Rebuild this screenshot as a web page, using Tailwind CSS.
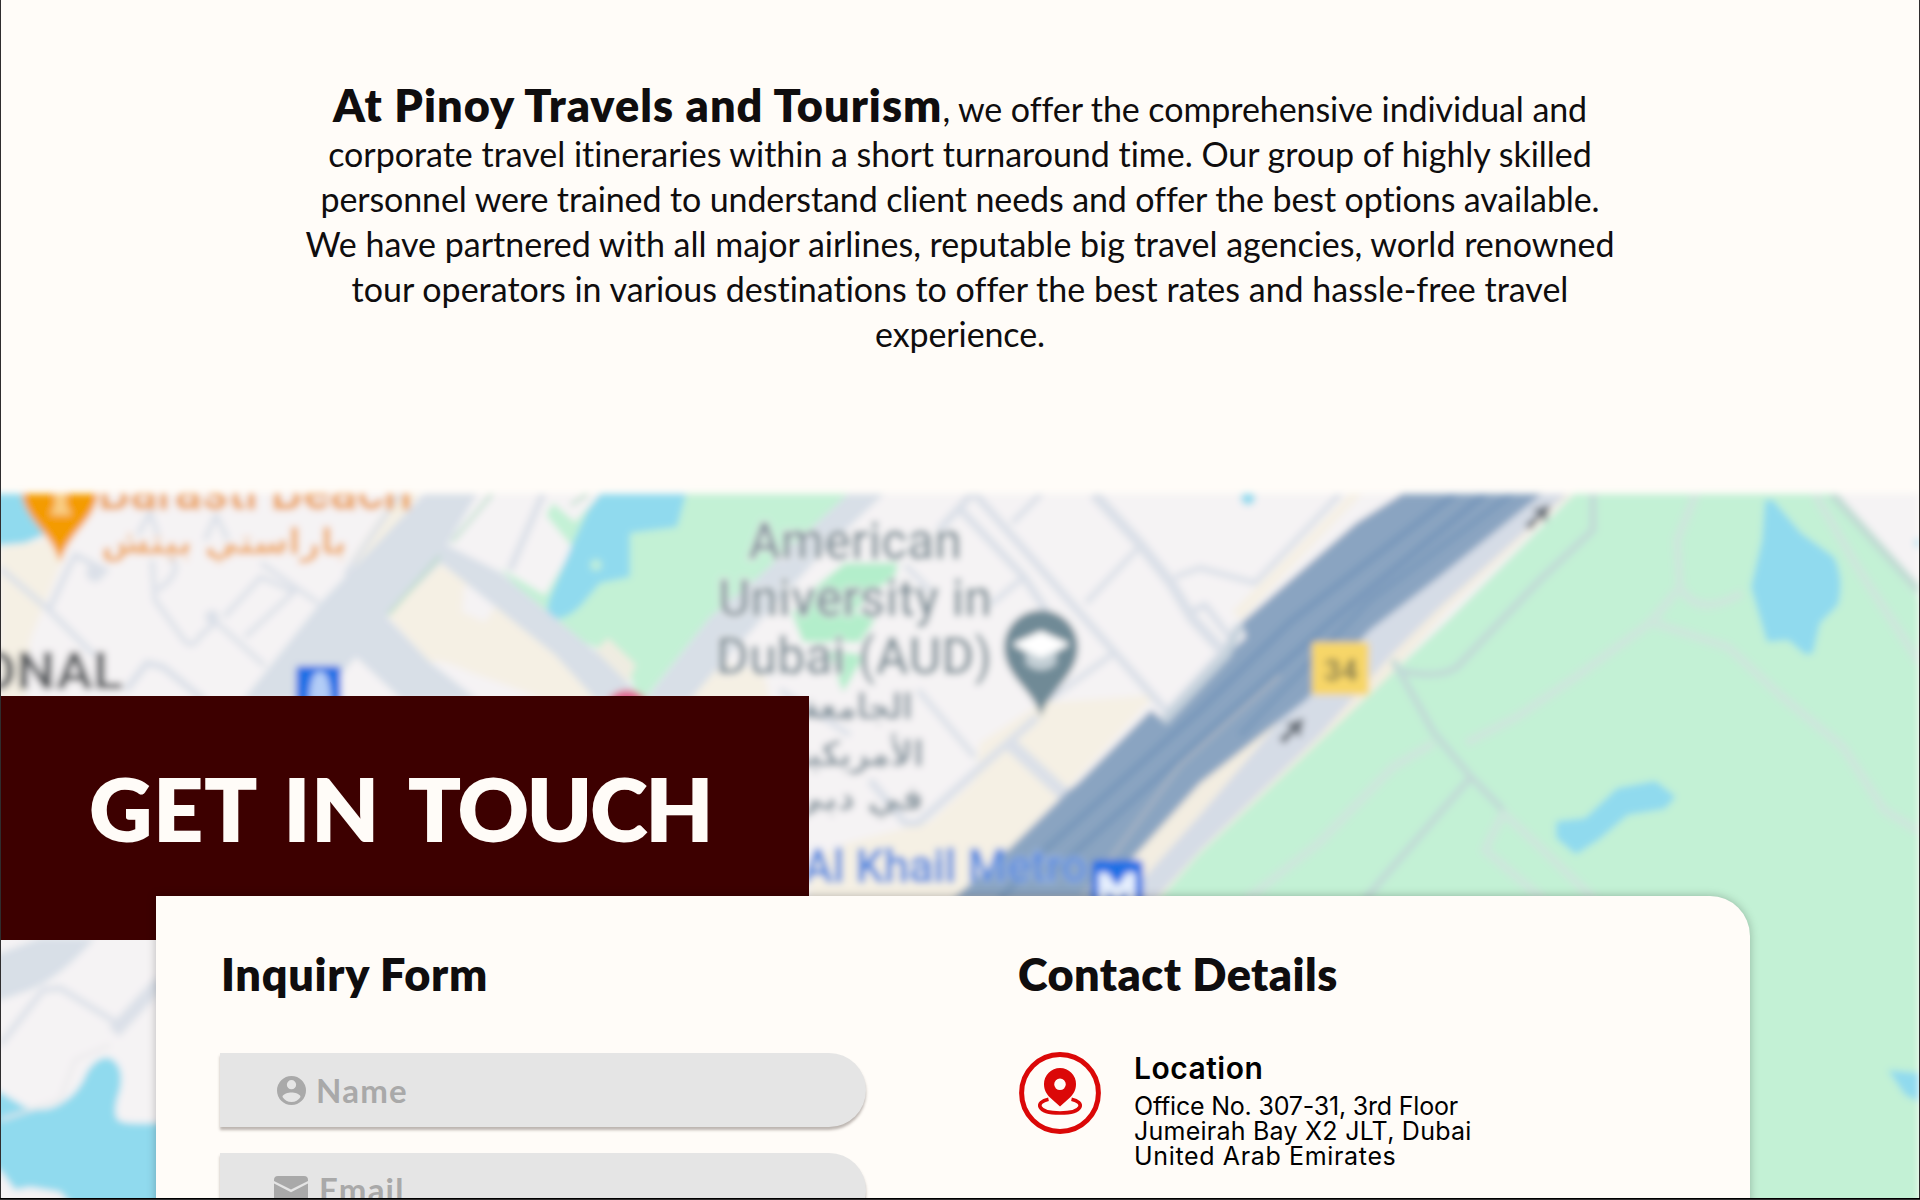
<!DOCTYPE html>
<html lang="en">
<head>
<meta charset="utf-8">
<title>Pinoy Travels and Tourism</title>
<script src="https://cdn.jsdelivr.net/npm/@tailwindcss/browser@4"></script>
</head>
<body class="bg-[#fffcf8]">
<main class="relative w-[1920px] h-[1200px] overflow-hidden bg-[#fffcf8] font-['Lato',sans-serif] text-[#0f0d0e]">

  <!-- Introduction -->
  <section class="h-[494px] pt-[83px] text-center">
    <p class="flex flex-col items-center whitespace-nowrap text-[34px] leading-[45px] [font-variant-ligatures:none]">
      <span class="mb-[3px] h-[45px]"><strong class="text-[45px] leading-[45px] font-[800] tracking-[1.06px]">At Pinoy Travels and Tourism</strong><span class="tracking-[-0.08px]">, we offer the comprehensive individual and</span></span>
      <span class="tracking-[-0.02px]">corporate travel itineraries within a short turnaround time. Our group of highly skilled</span>
      <span class="tracking-[-0.11px]">personnel were trained to understand client needs and offer the best options available.</span>
      <span>We have partnered with all major airlines, reputable big travel agencies, world renowned</span>
      <span>tour operators in various destinations to offer the best rates and hassle-free travel</span>
      <span class="tracking-[-0.1px]">experience.</span>
    </p>
  </section>

  <!-- Contact -->
  <section class="relative h-[706px]">
    <svg class="absolute left-0 top-0 overflow-visible" width="1920" height="706" viewBox="0 494 1920 706" font-family="Roboto, sans-serif" aria-hidden="true">
      <defs><filter id="soft" x="0" y="470" width="1930" height="740" filterUnits="userSpaceOnUse"><feGaussianBlur stdDeviation="3.5"/></filter>
      <clipPath id="frame"><rect x="-20" y="494" width="1939" height="720"/></clipPath></defs>
      <g filter="url(#soft)"><g clip-path="url(#frame)">
        <rect x="-20" y="494" width="1940" height="720" fill="#f5f3f4"/>
        <!-- sand areas -->
        <g fill="#f5f0e4">
          <path d="M0 547 45 540 62 560 46 600 30 640 25 700H0Z"/>
          <path d="M437 562 388 616 430 662Q440 658 470 672L520 690 545 700H600L590 665Z"/>
          <path d="M980 743 1041 703 1155 695 1069 787 1008 850 990 900H809V860L850 842 930 822 975 780Z"/>
          <path d="M710 658 688 700H770L764 672Z"/>
          <path d="M1362 494 1241 620 1232 612 1350 494Z"/>
          <path d="M395 494 350 560 360 572 420 494Z"/>
        </g>
        <path d="M464 585 500 600 485 622 462 612Z" fill="#f5f3f4"/>
        <!-- parks -->
        <g fill="#c3f1d5">
          <path d="M500 568 545 595 573 548 546 515 553 503 575 522 600 494H848L755 580 710 617 640 705 625 660 590 645 555 630Z"/>
          <path d="M1574 494H1830L1920 600V1214H1100V960L1155 897 1200 853 1374 690 1448 620Z"/>
        </g>
        <g fill="#b3eecb">
          <path d="M845 563H898L894 580 872 590 855 612 875 620 860 642H803L792 613 812 590Z"/><path d="M828 650 864 655 843 692Z"/>
        </g>
        <path d="M592 655 608 638 636 665 624 690Z" fill="#efece1"/>
        <!-- water -->
        <g fill="#90daee">
          <path d="M-20 494H26L44 535 25 543-20 547Z"/>
          <path d="M600 494H686L677 527 630 533V577L600 583 588 597Q572 618 556 619L547 612 549 600 571 547 588 510Z"/>
          <path d="M1765 500H1773L1801 533 1834 557Q1845 580 1838 605L1820 623 1813 653 1806 655 1788 640 1767 642 1751 587 1762 540Z"/>
          <path d="M1558 823 1586 820 1618 790 1655 783 1673 797 1664 807 1627 813 1599 837 1576 852 1558 837Z" stroke="#90daee" stroke-width="4" stroke-linejoin="round"/>
          <path d="M-20 1085 0 1092 25 1107Q45 1114 62 1103Q80 1092 87 1072Q98 1055 110 1058Q125 1066 120 1090Q112 1112 118 1120Q125 1125 156 1123H200V1214H80L60 1192 30 1187 15 1190 0 1170-20 1165Z"/>
          <path d="M1888 1070 1920 1073V1102L1905 1095Z"/>
          <circle cx="1248" cy="498" r="7"/><circle cx="1920" cy="543" r="5"/>
        </g>
        <circle cx="596" cy="565" r="6" fill="#bdeedb"/>
        <!-- streets -->
        <g fill="#d8dfe7">
          <path d="M424 494H477L447 545 500 572 600 655 645 700H596L555 655 441 563 386 616 430 662 478 700H402L356 657 320 700H243L320 603Z"/>
          <path d="M848 494H884L828 547 722 663 690 700H645L710 617 755 580Z"/>
          <path d="M-10 957 40 938H95Q60 978 30 990L-10 1004Z"/>
        </g>
        <g fill="none" stroke="#dbe0e8" stroke-linejoin="round">
          <g stroke-width="6">
            <path d="M0 568 49 610 94 655M49 610 69 567 75 555 108 572"/>
            <path d="M152 560 155 600 184 640Q193 650 200 636L216 622 265 666" stroke-width="5"/>
            <path d="M224 617 261 577 294 592 245 637M261 563 318 603M158 590Q185 570 170 558" stroke-width="5"/>
            <path d="M126 690 147 663 163 667 204 700" stroke-width="7"/>
            <path d="M138 535 150 512 158 535M205 540 216 515 228 540M400 494 345 575" stroke-width="5"/>
            <path d="M543 494 510 570" stroke-width="7"/>
            <path d="M0 1045 43 990 60 988 125 1028"/>
            <path d="M114 1032 160 982" stroke-width="14"/>
            <path d="M0 1120 60 1100 75 1060 110 1045" stroke="#e9e9ea" stroke-width="3"/>
            <path d="M959 508 1024 577 1047 612M975 494 1167 712M972 494 939 530" stroke-width="8"/>
            <path d="M1086 603 1139 547M1049 700 1114 653M1012 523 1041 494M1024 577 990 605"/>
            <path d="M1094 494 1139 543 1171 583 1192 618 1226 655" stroke-width="11"/>
            <path d="M1175 577 1200 568 1255 583 1340 494" stroke-width="6"/>
            <path d="M1185 615 1205 605 1232 640 1167 712" stroke-width="7"/>
            <path d="M1037 717 918 823H905L870 780" stroke-width="8"/>
            <path d="M1006 740 1065 795" stroke-width="14"/>
            <path d="M918 690 975 757M905 565 930 590M780 690 850 735"/>
          </g>
        </g>
        <path d="M571 505 588 494M492 494 452 542M440 556 388 615" fill="none" stroke="#b5dcc6" stroke-width="3"/>
        <circle cx="95" cy="573" r="9" fill="#dbe0e8"/><circle cx="212" cy="617" r="7" fill="#dbe0e8"/>
        <!-- highway -->
        <path d="M1402 494H1572L1448 610 1385 680 1200 853 1150 910H955L1250 645Z" fill="#f3ede1"/>
        <path d="M1500 494H1567L1440 607 1393 653 1320 735 1200 850 1150 905H1120L1200 815 1370 615Z" fill="#d5dce6"/>
        <path d="M1402 494 1356 523 1241 623 1246 637 1200 680 1163 720 1151 710 1078 783 1069 790 1008 850 952 900H1094L1131 860 1200 783 1306 700 1370 630 1439 577 1542 494Z" fill="#8aa4c1"/>
        <g fill="none" stroke="#7898bb" stroke-width="7">
          <path d="M1455 494 1290 622 1200 710 1045 850 1000 900M1485 494 1330 622 1210 730 1050 875"/>
          <path d="M1512 494 1370 600 1240 735" stroke-width="5"/>
        </g>
        <path d="M1280 675 1180 765 1082 897" fill="none" stroke="#aeb8c3" stroke-width="3"/>
        <path d="M1240 625 1226 655 1163 722" fill="none" stroke="#c5d1dc" stroke-width="9"/>
        <!-- park paths -->
        <g fill="none" stroke="#cde7dc" stroke-width="9" stroke-linejoin="round">
          <path d="M1696 494 1677 540 1680 587 1650 623 1576 677 1517 717 1466 743M1682 590Q1700 618 1742 593M1654 623 1728 647 1780 695 1843 747 1884 810 1920 832M1815 494 1861 573 1920 663M1434 743 1393 767 1319 843 1246 900M1503 813 1485 850 1544 900M1500 810 1540 847 1595 900"/>
          <path d="M1593 494V530L1540 580 1457 667Q1440 680 1397 670M1393 660 1434 733 1471 777 1503 810M1471 777 1384 877 1365 900" stroke="#c1dad7" stroke-width="7"/>
          <path d="M1832 494 1920 592" stroke="#c0dcd3"/>
        </g>
        <g fill="#6d757e"><path d="M1532 510 1550 504 1546 523 1541 517 1530 530 1525 525 1538 514Z"/><path d="M1285 724 1304 718 1300 738 1295 732 1284 744 1279 739 1291 728Z"/></g>
        <rect x="1312" y="642" width="57" height="53" rx="3" fill="#f7d667"/>
        <text x="1324" y="681" font-size="31" font-weight="700" fill="#857d50" textLength="34" lengthAdjust="spacingAndGlyphs">34</text>
        <!-- place labels -->
        <g font-size="51" font-weight="500" fill="#7b8c95" stroke="#fbfbfb" stroke-width="3" paint-order="stroke">
          <text x="748" y="559" textLength="214" lengthAdjust="spacingAndGlyphs">American</text>
          <text x="718" y="616" textLength="274" lengthAdjust="spacingAndGlyphs">University in</text>
          <text x="716" y="674" textLength="276" lengthAdjust="spacingAndGlyphs">Dubai (AUD)</text>
        </g>
        <g font-size="35" font-weight="700" fill="#8b9aa3" text-anchor="middle" font-family="'DejaVu Sans', sans-serif">
          <text x="857" y="719" textLength="112" lengthAdjust="spacingAndGlyphs">الجامعة</text>
          <text x="857" y="766" textLength="134" lengthAdjust="spacingAndGlyphs">الأمريكية</text>
          <text x="857" y="810" textLength="134" lengthAdjust="spacingAndGlyphs">في دبي</text>
          <text x="224" y="554" textLength="246" lengthAdjust="spacingAndGlyphs" fill="#efaa62">باراستي بيتش</text>
        </g>
        <text x="98" y="509" font-size="50" font-weight="500" fill="#eca35a" stroke="#eca35a" textLength="314" lengthAdjust="spacingAndGlyphs">Barasti Beach</text>
        <text x="-22" y="689" font-size="51" font-weight="700" fill="#5d6064" textLength="145" lengthAdjust="spacingAndGlyphs">ONAL</text>
        <text x="803" y="882" font-size="46" font-weight="500" fill="#5488dd" stroke="#bcd0ee" stroke-width="2" paint-order="stroke" textLength="284" lengthAdjust="spacingAndGlyphs">Al Khail Metro</text>
        <!-- pins and transit markers -->
        <path d="M22 494H98C94 522 68 532 60 563 52 532 26 522 22 494Z" fill="#f49b06"/>
        <path d="M55 494H66V505L72 515H50L55 505Z" fill="#f9ce83"/>
        <path d="M1041 718C1036 692 1004 677 1004 647A37 37 0 0 1 1078 647C1078 677 1046 692 1041 718Z" fill="#708a96"/>
        <path d="M1014 645 1041 631 1068 645 1056 653V664Q1041 676 1026 664V653Z" fill="#c3cfd5"/>
        <path d="M1012 644 1041 631 1070 644 1041 658Z" fill="#fff"/>
        <rect x="296" y="666" width="45" height="50" rx="4" fill="#1f6fe5"/>
        <path d="M309 702Q310 671 320 671T331 702Z" fill="#b3cdf7"/>
        <rect x="1092" y="860" width="51" height="50" rx="5" fill="#1f6fe5"/>
        <path d="M1099 910V873H1107L1117 887 1127 873H1135V910H1127V890L1117 902 1107 890V910Z" fill="#e6effd" stroke="#e6effd"/>
        <circle cx="627" cy="713" r="23" fill="#e0608b"/>
      </g></g>
    </svg>

    <div class="relative flex flex-col items-start pt-[202px]">
      <div class="h-[244px] w-[809px] bg-[#3d0000] pl-[89px] pt-[59px]">
        <h2 class="whitespace-nowrap text-[88px] leading-[106px] font-[800] tracking-[0.5px] text-[#fffcf8] [word-spacing:7px]">GET IN <span class="tracking-[-2.5px]">TOUCH</span></h2>
      </div>

      <div class="-mt-[44px] ml-[156px] flex h-[400px] w-[1594px] rounded-tr-[40px] bg-[#fffcf8] pl-16 pt-14 shadow-[0_0_10px_rgba(0,0,0,0.25)]">
        <div class="w-[799px]">
          <h3 class="pl-px whitespace-nowrap text-[45px] leading-[44px] font-[800] tracking-[0.7px]">Inquiry Form</h3>
          <div class="mt-[57px] flex w-[646px] flex-col gap-[26px] text-[33px] leading-none font-bold text-[#a9a9a9]">
            <div class="flex h-[74px] items-center rounded-r-full bg-[#e5e5e5] pl-[57px] shadow-[0_3px_3px_rgba(60,45,40,0.35)]">
              <svg width="29" height="29" viewBox="2 2 20 20" fill="currentColor"><path d="M12 2a10 10 0 1 0 0 20 10 10 0 0 0 0-20Zm0 2.8a3.2 3.2 0 1 1 0 6.4 3.2 3.2 0 0 1 0-6.4ZM12 20a8 8 0 0 1-6.2-3.6c.1-2 4.1-3 6.2-3s6.1 1 6.2 3A8 8 0 0 1 12 20Z"/></svg>
              <span class="ml-[10px] mt-px tracking-[1.2px]">Name</span>
            </div>
            <div class="flex h-[74px] items-center rounded-r-full bg-[#e5e5e5] pl-[54px] shadow-[0_3px_3px_rgba(60,45,40,0.35)]">
              <svg width="34" height="28" viewBox="0 0 34 28" fill="currentColor"><path d="M4 0H30A4 4 0 0 1 34 4V5L17 13.500 0 5V4A4 4 0 0 1 4 0ZM0 7.500 17 16.300 34 7.500V24A4 4 0 0 1 30 28H4A4 4 0 0 1 0 24Z"/></svg>
              <span class="-mt-px ml-[11px] tracking-[1.2px]">Email</span>
            </div>
          </div>
        </div>

        <div>
          <h3 class="-ml-px whitespace-nowrap text-[45px] leading-[44px] font-[800] tracking-[0.45px]">Contact Details</h3>
          <div class="mt-14 flex">
            <svg width="82" height="82" viewBox="0 0 82 82" fill="none" stroke="#db0808"><circle cx="41" cy="41" r="38.4" stroke-width="5"/><path d="M29.5 47.2C16 50 17 61 41 61S66 50 52.500 47.200" stroke-width="3.600"/><path fill="#db0808" stroke="none" fill-rule="evenodd" d="M41 16a16 16 0 0 0-16 16c0 6 2.500 10 6 13.500L41 54.500 51 45.500c3.500-3.500 6-7.500 6-13.500A16 16 0 0 0 41 16Zm0 10.500a5.800 5.800 0 1 1 0 11.600 5.800 5.800 0 0 1 0-11.600Z"/></svg>
            <div class="ml-[33px] -mt-[2px] whitespace-nowrap font-['Inter',sans-serif] text-black">
              <h4 class="text-[30px] leading-9 font-semibold tracking-[0.5px]">Location</h4>
              <p class="mt-2 flex flex-col text-[25px] leading-[25px]">
                <span class="tracking-[-0.2px]">Office No. 307-31, 3rd Floor</span>
                <span class="tracking-[0.24px]">Jumeirah Bay X2 JLT, Dubai</span>
                <span class="tracking-[0.65px]">United Arab Emirates</span>
              </p>
            </div>
          </div>
        </div>
      </div>
    </div>
  </section>

  <!-- Frame edges -->
  <div class="pointer-events-none absolute inset-0 border-x border-b border-[#2f2d2e]"></div>
  <div class="absolute inset-x-0 bottom-px h-px bg-black"></div>
</main>
</body>
</html>
